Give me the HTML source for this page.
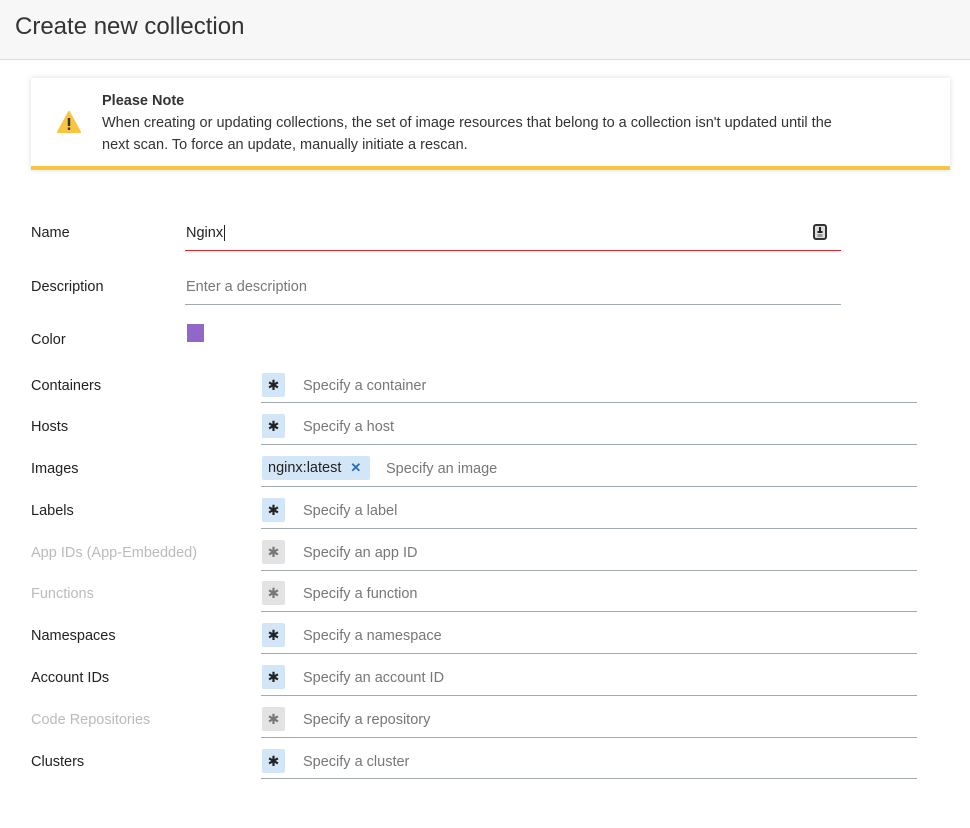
<!DOCTYPE html>
<html><head><style>
body{margin:0;width:970px;height:828px;background:#fff;font-family:"Liberation Sans",sans-serif;color:#222;position:relative;overflow:hidden}
.hdr{position:absolute;left:0;top:0;width:970px;height:59px;background:#f7f7f7;border-bottom:1px solid #ddd}
.hdr h1{margin:0;position:absolute;left:15px;top:13px;font-size:24px;font-weight:normal;color:#333}
.alert{position:absolute;left:31px;top:78px;width:919px;height:88px;background:#fff;border-bottom:4px solid #f9c440;box-shadow:0 0 5px rgba(0,0,0,.15)}
.alert .t{position:absolute;left:71px;top:12px;font-size:14.5px;line-height:22px;color:#333;width:755px}
.alert b{font-weight:bold}
.lbl{position:absolute;left:31px;font-size:14.5px;color:#222}
.dis{color:#bbb}
.in{position:absolute;font-size:14.5px}
.ul{position:absolute;height:1px;background:#a0aab0}
.chip{position:absolute;left:262px;width:23px;height:24px;background:#d3e6f8;border-radius:2px;text-align:center;font-size:14px;line-height:24px;color:#222}
.chip.g{background:#e3e3e3;color:#777}
.ph{position:absolute;left:303px;font-size:14.5px;color:#777}
</style></head><body>
<div class="hdr"><h1>Create new collection</h1></div>
<div class="alert">
<svg style="position:absolute;left:26px;top:33px" width="24" height="22" viewBox="0 0 24 22"><path d="M12 1 L23 21 L1 21 Z" fill="#f9c440" stroke="#f9c440" stroke-linejoin="round" stroke-width="2"/><rect x="10.8" y="7" width="2.4" height="8" fill="#333"/><rect x="10.8" y="16.5" width="2.4" height="2.4" fill="#333"/></svg>
<div class="t"><b>Please Note</b><br>When creating or updating collections, the set of image resources that belong to a collection isn't updated until the next scan. To force an update, manually initiate a rescan.</div>
</div>

<div class="lbl" style="top:225px">Name</div>
<div class="in" style="left:186px;top:225px;color:#222">Nginx<span style="border-left:1px solid #222;margin-left:1px"></span></div>
<svg style="position:absolute;left:813px;top:224px" width="14" height="16" viewBox="0 0 14 16"><rect x="1" y="1" width="12" height="14" rx="2" fill="#ddd" stroke="#333" stroke-width="2"/><rect x="6" y="3" width="2" height="5" fill="#222"/><rect x="4.5" y="7" width="5" height="2" fill="#222"/><rect x="4.5" y="10" width="5" height="3" fill="#999"/></svg>
<div class="ul" style="left:185px;top:250px;width:656px;background:#e8242a"></div>

<div class="lbl" style="top:279px">Description</div>
<div class="in" style="left:186px;top:279px;color:#777">Enter a description</div>
<div class="ul" style="left:185px;top:304px;width:656px"></div>

<div class="lbl" style="top:332px">Color</div>
<div style="position:absolute;left:187px;top:324px;width:17px;height:18px;background:#9168c9"></div>

<div class="lbl" style="top:378px">Containers</div><div class="chip" style="top:373px">✱</div><div class="ph" style="top:378px">Specify a container</div><div class="ul" style="left:261px;top:402px;width:656px"></div>
<div class="lbl" style="top:419px">Hosts</div><div class="chip" style="top:414px">✱</div><div class="ph" style="top:419px">Specify a host</div><div class="ul" style="left:261px;top:444px;width:656px"></div>
<div class="lbl" style="top:461px">Images</div><div class="chip" style="top:456px;width:108px;font-size:14.5px;line-height:24px;text-align:left;padding-left:6px;box-sizing:border-box">nginx:latest <span style="color:#2a6fb5;font-weight:bold;margin-left:5px;font-size:13px">✕</span></div><div class="ph" style="top:461px;left:386px">Specify an image</div><div class="ul" style="left:261px;top:486px;width:656px"></div>
<div class="lbl" style="top:503px">Labels</div><div class="chip" style="top:498px">✱</div><div class="ph" style="top:503px">Specify a label</div><div class="ul" style="left:261px;top:528px;width:656px"></div>
<div class="lbl dis" style="top:545px">App IDs (App-Embedded)</div><div class="chip g" style="top:540px">✱</div><div class="ph" style="top:545px">Specify an app ID</div><div class="ul" style="left:261px;top:570px;width:656px"></div>
<div class="lbl dis" style="top:586px">Functions</div><div class="chip g" style="top:581px">✱</div><div class="ph" style="top:586px">Specify a function</div><div class="ul" style="left:261px;top:611px;width:656px"></div>
<div class="lbl" style="top:628px">Namespaces</div><div class="chip" style="top:623px">✱</div><div class="ph" style="top:628px">Specify a namespace</div><div class="ul" style="left:261px;top:653px;width:656px"></div>
<div class="lbl" style="top:670px">Account IDs</div><div class="chip" style="top:665px">✱</div><div class="ph" style="top:670px">Specify an account ID</div><div class="ul" style="left:261px;top:695px;width:656px"></div>
<div class="lbl dis" style="top:712px">Code Repositories</div><div class="chip g" style="top:707px">✱</div><div class="ph" style="top:712px">Specify a repository</div><div class="ul" style="left:261px;top:737px;width:656px"></div>
<div class="lbl" style="top:754px">Clusters</div><div class="chip" style="top:749px">✱</div><div class="ph" style="top:754px">Specify a cluster</div><div class="ul" style="left:261px;top:778px;width:656px"></div>
</body></html>
